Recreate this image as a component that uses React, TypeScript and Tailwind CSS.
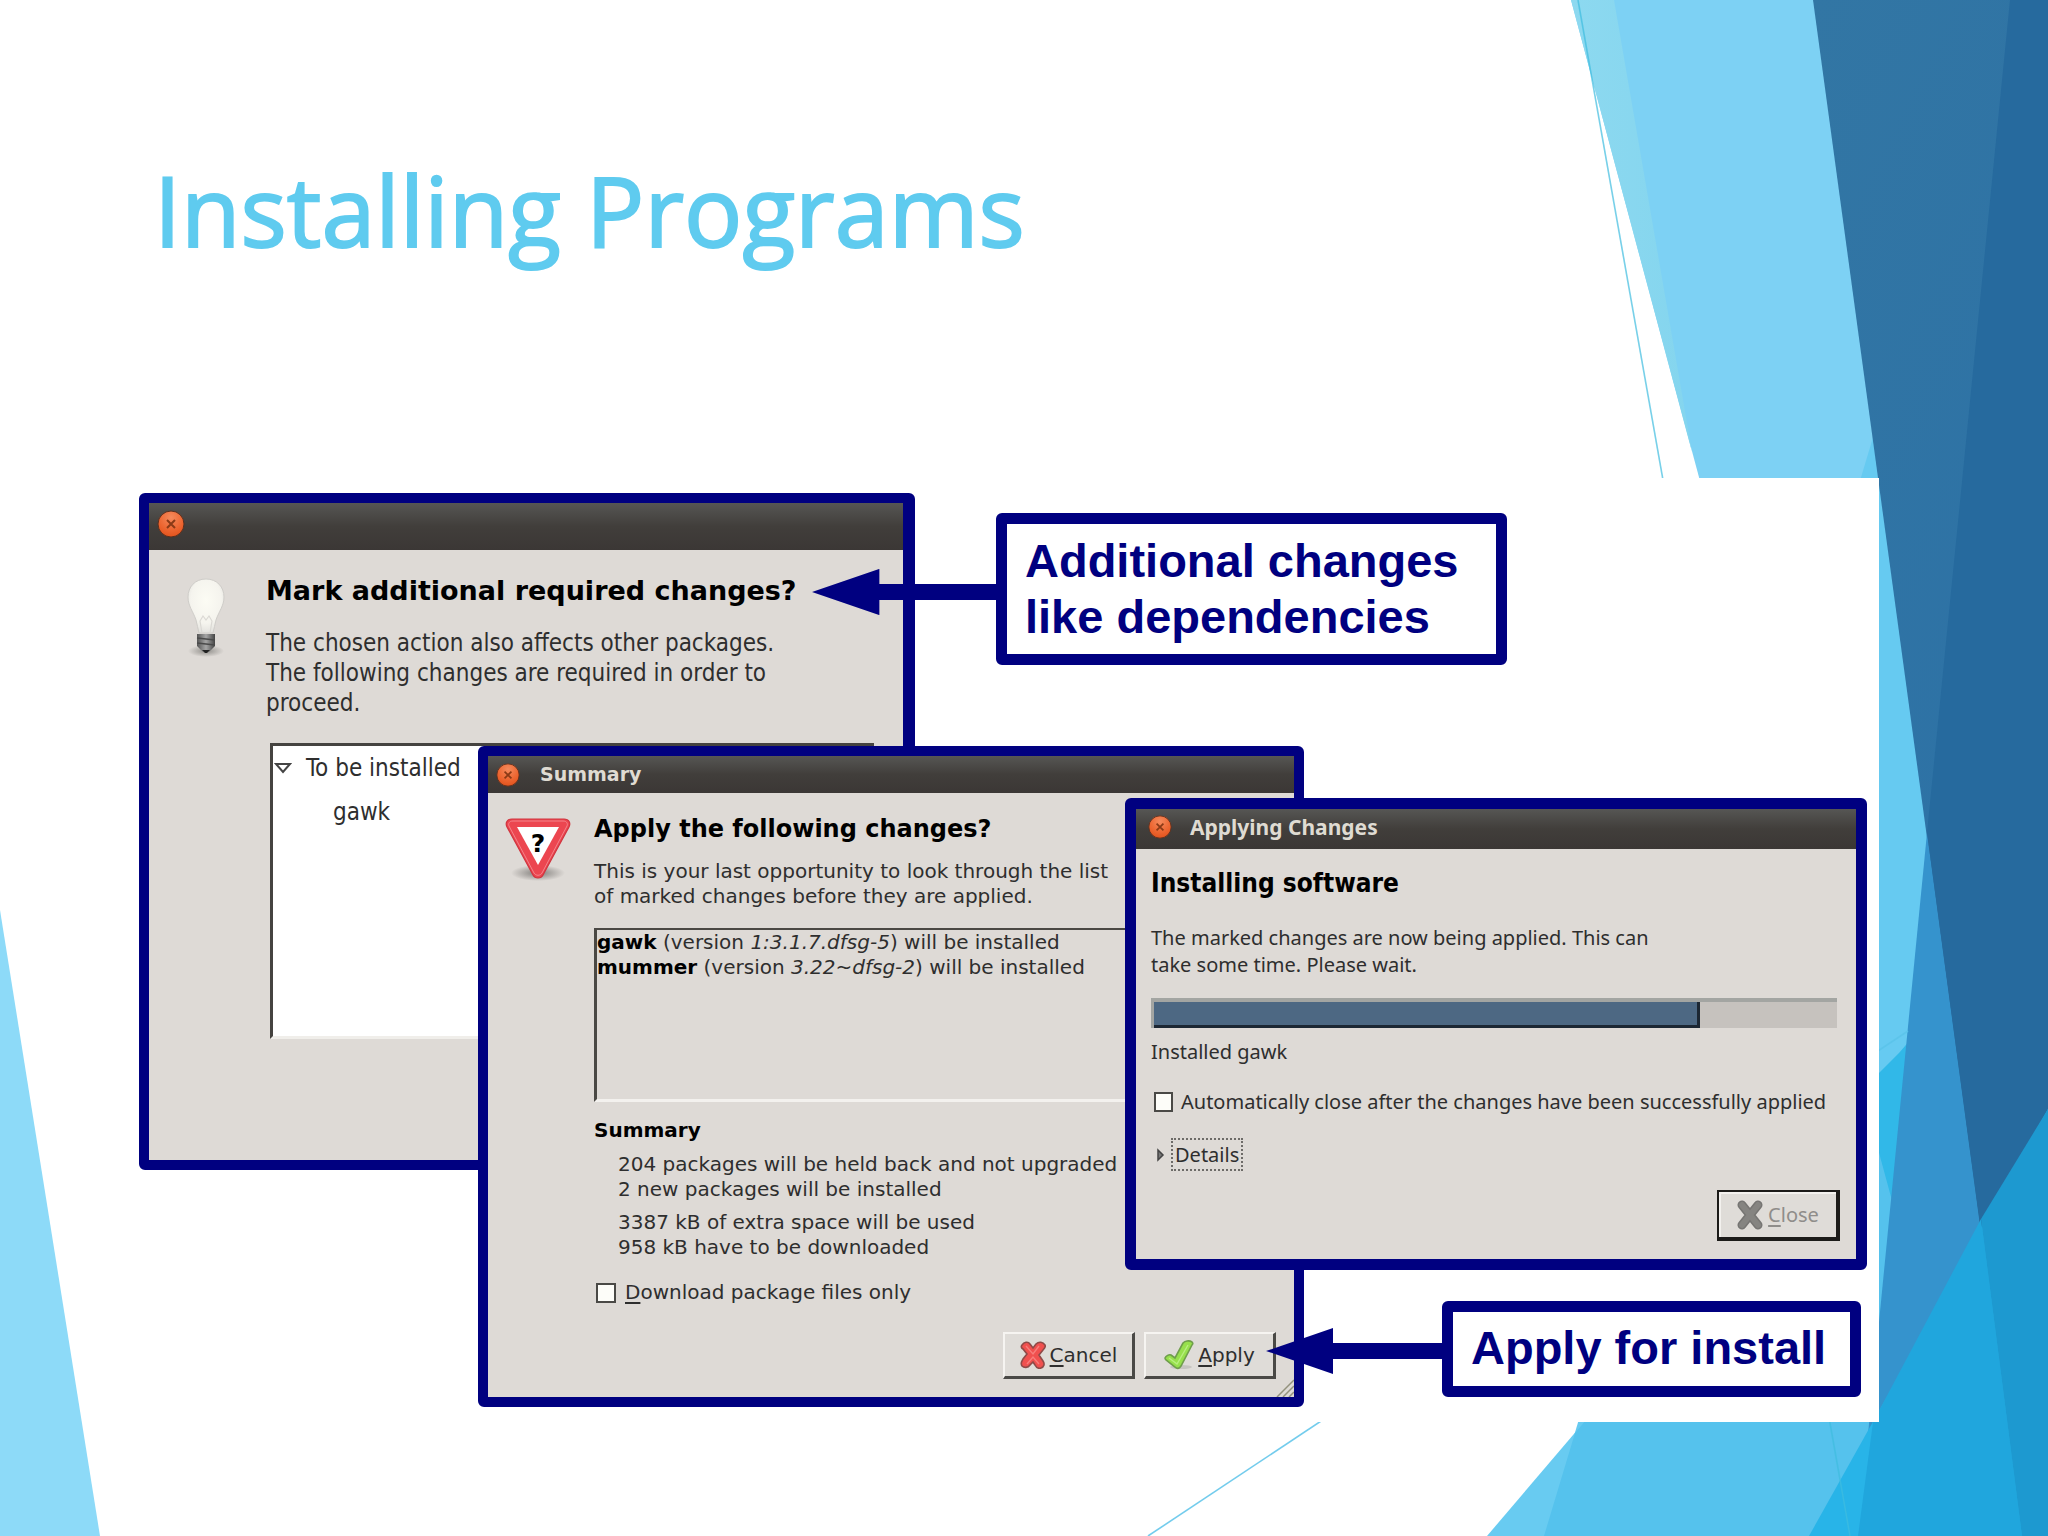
import React from "react";

const sans = "font-['DejaVu_Sans','Liberation_Sans',sans-serif]";
const narrow = "font-['DejaVu_Sans_Condensed','Open_Sans',sans-serif]";
const slim = "font-['Noto_Sans','Open_Sans',sans-serif]";

function Backdrop() {
  return (
    <svg
      className="absolute inset-0 h-full w-full"
      viewBox="0 0 2048 1536"
      preserveAspectRatio="none"
      aria-hidden="true"
    >
      <defs>
        <linearGradient id="deep" x1="0" y1="0" x2="0.3" y2="1">
          <stop offset="0" stopColor="#3276a4" />
          <stop offset="1" stopColor="#2b70a6" />
        </linearGradient>
        <linearGradient id="edge" x1="0" y1="0" x2="1" y2="0">
          <stop offset="0" stopColor="#8dd9f0" />
          <stop offset="1" stopColor="#84d5ee" />
        </linearGradient>
      </defs>
      <polygon points="0,910 100,1536 0,1536" fill="#8ddaf8" />
      <polygon points="1571,0 2048,0 2048,1536 1983,1536" fill="#7dd1f4" />
      <polygon points="1571,0 1614,0 1692,452" fill="url(#edge)" />
      <polygon points="2004,0 2048,0 2048,1536 1544,1536" fill="#66caf1" />
      <polygon points="1487,1536 2048,878 2048,1536" fill="#68cbf1" />
      <polygon points="1544,1536 1575,1433 1900,1052 2048,878 2048,1536" fill="#55c2ed" />
      <polygon points="1862,1090 1900,1052 2048,878 2048,1536 1983,1536" fill="#31b8e8" />
      <polygon points="1813,0 2048,0 2048,1536 2022,1536" fill="url(#deep)" />
      <polygon points="1927,833 2022,1536 1858,1536" fill="#3593cd" />
      <polygon points="2010,0 2048,0 2048,1536 2022,1536 1927,833" fill="#266a9e" />
      <polygon points="1809,1536 2048,1109 2048,1536" fill="#28b4e8" />
      <polygon points="1873,1422 1981,1219 2022,1536 1858,1536" fill="#20a6dd" />
      <polygon points="1981,1219 2048,1109 2048,1536 2022,1536" fill="#1d99d0" />
      <line x1="1578" y1="0" x2="1850" y2="1536" stroke="#3fbde0" strokeWidth="1.6" opacity="0.7" />
      <line x1="1148" y1="1536" x2="1908" y2="1031" stroke="#5bc4ea" strokeWidth="1.6" opacity="0.85" />
    </svg>
  );
}

function CloseButton({ className }: { className: string }) {
  return (
    <button type="button" aria-label="Close window" className={className}>
      <svg viewBox="0 0 28 28" className="h-full w-full">
        <defs>
          <radialGradient id="orange" cx="0.5" cy="0.25" r="0.8">
            <stop offset="0" stopColor="#f58a5c" />
            <stop offset="0.6" stopColor="#ec6530" />
            <stop offset="1" stopColor="#e0501a" />
          </radialGradient>
        </defs>
        <circle cx="14" cy="14" r="13" fill="url(#orange)" stroke="#5a2f1e" strokeWidth="1" />
        <path d="M10 10l8 8M18 10l-8 8" stroke="#8a3a16" strokeWidth="2" />
      </svg>
    </button>
  );
}

const titleBar = "flex bg-linear-to-b from-[#565654] via-[#413e3b] to-[#3b3735] pl-2 font-bold text-[#dfdbd2]";

function Bulb() {
  return (
    <svg viewBox="0 0 48 84" className="h-[84px] w-12 shrink-0" aria-hidden="true">
      <defs>
        <radialGradient id="glass" cx="0.5" cy="0.4" r="0.6">
          <stop offset="0" stopColor="#fcfcf4" />
          <stop offset="0.7" stopColor="#f5f4ee" />
          <stop offset="1" stopColor="#e3e2de" />
        </radialGradient>
        <linearGradient id="socket" x1="0" x2="1" y1="0" y2="0">
          <stop offset="0" stopColor="#555" />
          <stop offset="0.5" stopColor="#a5a5a5" />
          <stop offset="1" stopColor="#444" />
        </linearGradient>
        <radialGradient id="bulbShade">
          <stop offset="0" stopColor="#8f8d89" />
          <stop offset="1" stopColor="#dedad6" />
        </radialGradient>
      </defs>
      <ellipse cx="24" cy="75" rx="18" ry="6" fill="url(#bulbShade)" />
      <path
        d="M24 3C13 3 6 11 6 21c0 9 5 14 8 23 1 4 2 9 3 13h14c1-4 2-9 3-13 3-9 8-14 8-23C42 11 35 3 24 3z"
        fill="url(#glass)"
        stroke="#cfcdc9"
        strokeWidth="1"
      />
      <path d="M20 57l-2-12 3-5 3 4 3-4 3 5-2 12" fill="none" stroke="#dbd9d4" strokeWidth="1.2" />
      <path d="M15 58h18v12l-6 6h-6l-6-6z" fill="url(#socket)" />
      <path d="M15 62l18 2M15 67l18 2" stroke="#4a4a4a" strokeWidth="1.5" />
      <path d="M20 74h8l-3 3h-2z" fill="#222" />
    </svg>
  );
}

function QuestionSign() {
  return (
    <svg viewBox="0 0 68 66" className="h-[66px] w-[68px] shrink-0" aria-hidden="true">
      <defs>
        <radialGradient id="signShade">
          <stop offset="0" stopColor="#7f7c79" />
          <stop offset="1" stopColor="#dedad6" />
        </radialGradient>
      </defs>
      <ellipse cx="34" cy="58" rx="27" ry="8" fill="url(#signShade)" />
      <path
        d="M8 4h52c5 0 7 4 5 8L39 60c-2 4-8 4-10 0L3 12C1 8 3 4 8 4z"
        fill="#ec4650"
        stroke="#d0343e"
        strokeWidth="1.2"
      />
      <path d="M9 6h50c4 0 5 3 4 5L38 58c-2 3-6 3-8 0L5 11C4 9 5 6 9 6z" fill="none" stroke="#f4838a" strokeWidth="1" />
      <path d="M13 12h42L34 50z" fill="#fff" />
      <text x="34" y="37" textAnchor="middle" fontFamily="DejaVu Sans" fontWeight="700" fontSize="25" fill="#000">
        ?
      </text>
    </svg>
  );
}

function RedCross() {
  return (
    <svg viewBox="0 0 26 28" className="h-7 w-[26px]" aria-hidden="true">
      <path
        d="M2 4c2-3 6-4 8-1l3 4 3-4c3-3 7-2 9 1 1 2-1 4-2 5l-4 5 4 6c2 3 1 6-2 7-3 1-5-1-6-3l-2-3-3 3c-2 3-6 3-8 1-2-3 0-5 1-7l4-5-4-5C1 7 1 5 2 4z"
        fill="#f0504f"
        stroke="#8f4a48"
        strokeWidth="1.6"
      />
      <path d="M6 5l7 8 6-8M7 23l6-7 6 7" fill="none" stroke="#f87d7b" strokeWidth="1.4" />
    </svg>
  );
}

function GreenTick() {
  return (
    <svg viewBox="0 0 30 30" className="h-[30px] w-[30px]" aria-hidden="true">
      <ellipse cx="17" cy="27" rx="11" ry="2" fill="#c6c4c0" />
      <path
        d="M1 18c1-2 4-4 6-3l4 3L19 3c2-2 6-3 9-1 1 1 1 2 0 3L17 26c-2 3-4 3-6 1L2 20c-1-1-1-1-1-2z"
        fill="#97e04c"
        stroke="#6f9e4b"
        strokeWidth="1.6"
      />
      <path d="M5 18l8 6L24 5" fill="none" stroke="#b9ee80" strokeWidth="1.4" />
    </svg>
  );
}

function GreyCross() {
  return (
    <svg viewBox="0 0 28 30" className="h-[30px] w-7" aria-hidden="true">
      <path d="M6 5l16 20M22 5L6 25" stroke="#767573" strokeWidth="9" strokeLinecap="round" />
      <path d="M6 5l16 20M22 5L6 25" stroke="#858481" strokeWidth="6" strokeLinecap="round" />
    </svg>
  );
}

function Arrow({ className }: { className: string }) {
  return (
    <svg viewBox="0 0 184 46" preserveAspectRatio="xMinYMid slice" className={className} aria-hidden="true">
      <path d="M0 23L67 0v15h117v16H67v15z" fill="#000080" />
    </svg>
  );
}

const checkbox = "shrink-0 appearance-none border-2 border-[#4a4946] bg-[#fdfdf9]";
const raised =
  "flex items-center justify-center border-t-2 border-l-2 border-r-3 border-b-3 border-t-[#f6f4f1] border-l-[#f6f4f1] border-r-[#4a4946] border-b-[#4a4946] bg-[#dfdcd8]";
const accessKey = "underline decoration-2 underline-offset-3";

function MarkWindow() {
  return (
    <section className="absolute top-[15px] left-[19px] h-[677px] w-[776px] rounded-md border-[10px] border-r-[12px] border-[#000080] bg-[#dedad6]">
      <div className={`${titleBar} h-[47px] items-start pt-[7px]`}>
        <CloseButton className="h-7 w-7" />
      </div>
      <div className="flex pt-[26px] pr-[29px] pl-[33px]">
        <Bulb />
        <div className="ml-9 grow whitespace-nowrap">
          <h2 className={`${sans} text-[27px] leading-[30px] font-bold text-black`}>Mark additional required changes?</h2>
          <p className={`${narrow} mt-[22px] text-[24px] leading-[30px] text-[#2e2e2e]`}>
            The chosen action also affects other packages.
            <br />
            The following changes are required in order to
            <br />
            proceed.
          </p>
          <div className="mt-[25px] ml-1 h-[296px] border-t-3 border-b-3 border-l-3 border-[#454340] border-b-[#f0eeea] bg-white">
            <ul className={`${narrow} text-[24px] leading-[44px] text-[#2e2e2e]`}>
              <li className="flex items-center">
                <svg viewBox="0 0 18 12" className="ml-px h-3 w-[18px]" aria-hidden="true">
                  <path d="M2 2h14L9 10z" fill="#fff" stroke="#444" strokeWidth="2" />
                </svg>
                <span className="ml-[14px]">To be installed</span>
              </li>
              <li className="pl-[60px]">gawk</li>
            </ul>
          </div>
        </div>
      </div>
    </section>
  );
}

function SummaryWindow() {
  return (
    <section
      className={`${sans} absolute top-[268px] left-[358px] h-[661px] w-[826px] rounded-md border-[10px] border-[#000080] bg-[#dedad6] text-[20px] leading-[25px] text-[#2e2e2e]`}
    >
      <div className={`${titleBar} h-[37px] items-center gap-5 text-[19px]`}>
        <CloseButton className="h-6 w-6" />
        <span>Summary</span>
      </div>
      <div className="flex gap-[22px] pt-[22px] pr-[18px] pl-4 whitespace-nowrap">
        <QuestionSign />
        <div className="grow">
          <h2 className="text-[24px] leading-7 font-bold text-black">Apply the following changes?</h2>
          <p className="mt-4">
            This is your last opportunity to look through the list
            <br />
            of marked changes before they are applied.
          </p>
          <div className="mt-[19px] h-[174px] border-t-2 border-b-3 border-l-3 border-[#4a4844] border-b-[#f3f1ee]">
            <p>
              <b className="text-black">gawk</b> (version <i>1:3.1.7.dfsg-5</i>) will be installed
            </p>
            <p>
              <b className="text-black">mummer</b> (version <i>3.22~dfsg-2</i>) will be installed
            </p>
          </div>
          <h3 className="mt-4 font-bold text-black">Summary</h3>
          <div className="mt-[9px] ml-6">
            <p>204 packages will be held back and not upgraded</p>
            <p>2 new packages will be installed</p>
            <p className="mt-2">3387 kB of extra space will be used</p>
            <p>958 kB have to be downloaded</p>
          </div>
          <label className="mt-5 flex items-center">
            <input type="checkbox" className={`${checkbox} ml-[2px] h-5 w-5`} />
            <span className="ml-[9px]">
              <span className={accessKey}>D</span>ownload package files only
            </span>
          </label>
        </div>
      </div>
      <div className="mt-[27px] flex justify-end gap-[9px] pr-[18px]">
        <button type="button" className={`${raised} h-[47px] w-[132px] gap-1`}>
          <RedCross />
          <span>
            <span className={accessKey}>C</span>ancel
          </span>
        </button>
        <button type="button" className={`${raised} h-[47px] w-[132px] gap-1`}>
          <GreenTick />
          <span>
            <span className={accessKey}>A</span>pply
          </span>
        </button>
      </div>
      <svg viewBox="0 0 18 18" className="absolute right-0 bottom-0 h-[18px] w-[18px]" aria-hidden="true">
        <path d="M1 18L18 1M7 18L18 7M13 18l5-5" stroke="#93917d" strokeWidth="1.5" />
      </svg>
    </section>
  );
}

function ApplyingWindow() {
  const done = 80;
  return (
    <section
      className={`${slim} absolute top-[320px] left-[1005px] h-[472px] w-[742px] rounded-md border-[11px] border-[#000080] bg-[#dedad6] text-[20px] leading-[27px] whitespace-nowrap text-[#2e2e2e]`}
    >
      <div className={`${titleBar} h-10 items-center gap-[18px] pb-1 text-[21px]`}>
        <CloseButton className="ml-1 h-6 w-6" />
        <span>Applying Changes</span>
      </div>
      <div className="pt-[19px] pr-[19px] pl-[15px]">
        <h2 className={`${narrow} text-[26px] leading-[30px] font-bold text-black`}>Installing software</h2>
        <p className="mt-[26px]">
          The marked changes are now being applied. This can
          <br />
          take some time. Please wait.
        </p>
        <div
          role="progressbar"
          aria-label="Installing software"
          aria-valuenow={done}
          className="mt-5 h-[30px] border-t-4 border-l-3 border-[#a3a5a2] bg-[#c6c2be]"
        >
          <div className="h-full border-r-3 border-b-3 border-[#1c2733] bg-[#4d6883]" style={{ width: `${done}%` }} />
        </div>
        <p className="mt-[10px]">Installed gawk</p>
        <label className="mt-[23px] flex items-center">
          <input type="checkbox" className={`${checkbox} ml-[3px] h-5 w-[19px]`} />
          <span className="ml-2">Automatically close after the changes have been successfully applied</span>
        </label>
        <button type="button" className="mt-[23px] flex items-center">
          <svg viewBox="0 0 8 14" className="ml-[6px] h-[14px] w-2" aria-hidden="true">
            <path d="M1 2l5 5-5 5z" fill="#777" stroke="#444" strokeWidth="1.5" />
          </svg>
          <span className="ml-[6px] border-2 border-dotted border-[#6d6b68] px-[2px] py-px">Details</span>
        </button>
      </div>
      <div className="mt-[19px] flex justify-end pr-4">
        <button
          type="button"
          disabled
          className="flex h-[51px] w-[123px] items-center justify-center gap-1 border-t-2 border-r-4 border-b-4 border-l-2 border-[#1c1b19] bg-[#dfdcd8] text-[#8f8d8a] shadow-[inset_2px_2px_0_#f3f1ee]"
        >
          <GreyCross />
          <span>
            <span className={accessKey}>C</span>lose
          </span>
        </button>
      </div>
    </section>
  );
}

const callout =
  "absolute rounded-md border-[11px] border-[#000080] bg-white font-['Liberation_Sans',Arial,sans-serif] text-[47px] leading-[56px] font-bold whitespace-nowrap text-[#000080]";

export default function App() {
  return (
    <main className="relative min-h-screen overflow-hidden bg-white">
      <Backdrop />
      <div className="relative">
        <h1 className="pt-[141px] pl-[154px] font-['Trebuchet_MS','Open_Sans',sans-serif] text-[97px] leading-[136px] text-[#5fcbef] [-webkit-text-stroke:2px_#5fcbef]">
          Installing Programs
        </h1>
        <figure className="relative mt-[201px] mr-[169px] ml-[120px] h-[944px] bg-white">
          <MarkWindow />
          <SummaryWindow />
          <ApplyingWindow />
          <figcaption className={`${callout} top-[35px] left-[876px] h-[152px] w-[511px] pt-[9px] pl-[18px]`}>
            Additional changes
            <br />
            like dependencies
          </figcaption>
          <Arrow className="absolute top-[91px] left-[692px] h-[46px] w-[185px]" />
          <p className={`${callout} top-[823px] left-[1322px] h-[96px] w-[419px] pt-[8px] pl-[18px]`}>Apply for install</p>
          <Arrow className="absolute top-[850px] left-[1146px] h-[46px] w-[178px]" />
        </figure>
      </div>
    </main>
  );
}
